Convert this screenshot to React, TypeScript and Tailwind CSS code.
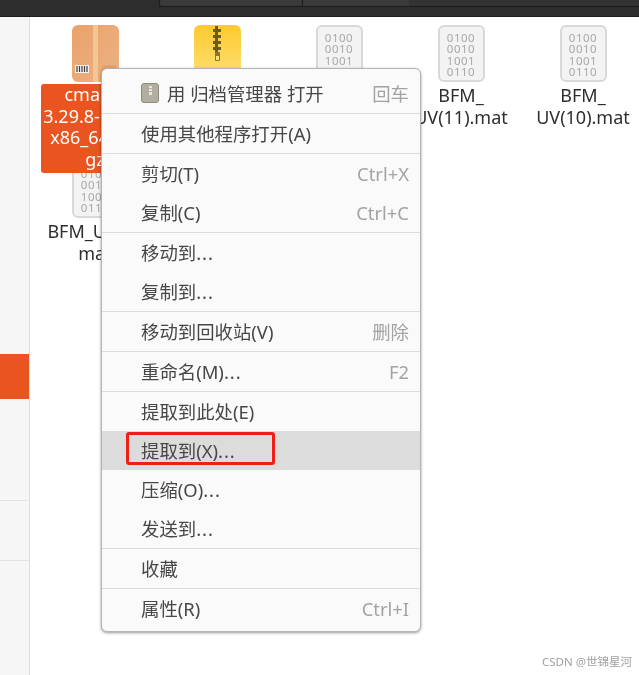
import React from "react";

const FONT = "font-['Noto_Sans','Noto_Sans_CJK_SC',sans-serif]";

function BinaryIcon() {
  return (
    <div className="w-[47px] h-[57px] shrink-0 rounded-[6px] border-2 border-[#d8d8d8] bg-[#f3f3f3] flex flex-col items-center pt-[5px] text-[11.5px] leading-[11.3px] tracking-[0.5px] text-[#a8a8a8]">
      <span>0100</span>
      <span>0010</span>
      <span>1001</span>
      <span>0110</span>
    </div>
  );
}

function PackageIcon() {
  return (
    <svg width="47" height="57" viewBox="0 0 47 57">
      <defs>
        <linearGradient id="pkgFill" x1="0" y1="0" x2="1" y2="1">
          <stop offset="0" stopColor="#e9a26b" />
          <stop offset="1" stopColor="#edb283" />
        </linearGradient>
      </defs>
      <rect x="0" y="0" width="47" height="57" rx="6" fill="url(#pkgFill)" />
      <rect x="21" y="0" width="5" height="57" fill="#f0c795" />
      <rect x="30" y="40" width="14" height="14" fill="#e5a26f" />
      <rect x="3" y="40" width="14" height="8" fill="#f7f3ee" />
      <path d="M5 41v6M7.5 41v6M10 41v6M12.5 41v6M15 41v6" stroke="#3d3d3d" strokeWidth="1.2" />
    </svg>
  );
}

function ZipIcon() {
  return (
    <svg width="47" height="57" viewBox="0 0 47 57">
      <defs>
        <linearGradient id="zipFill" x1="0" y1="0" x2="0" y2="1">
          <stop offset="0" stopColor="#fdc92f" />
          <stop offset="1" stopColor="#fde27a" />
        </linearGradient>
      </defs>
      <rect x="0" y="0" width="47" height="57" rx="6" fill="url(#zipFill)" />
      <path d="M21 1h3v3h3v3h-3v3h3v3h-3v3h3v3h-3v3h3v3h-3v3h-3v-3h-2v-3h2v-3h-2v-3h2v-3h-2v-3h2v-3h-2V4h2z" fill="#6e5a1e" />
      <rect x="21" y="27" width="5" height="9" rx="1" fill="#8a7430" />
      <rect x="22" y="31" width="3" height="4" fill="#fde27a" />
    </svg>
  );
}

function FileItem({ icon, children }: { icon: React.ReactNode; children?: React.ReactNode }) {
  return (
    <div className="flex flex-col items-center w-[122px]">
      {icon}
      {children}
    </div>
  );
}

type Row = { label: string; dots?: boolean; hint?: string; icon?: boolean; active?: boolean };

const groups: Row[][] = [
  [{ label: "用 归档管理器 打开", hint: "回车", icon: true }],
  [{ label: "使用其他程序打开(A)" }],
  [{ label: "剪切(T)", hint: "Ctrl+X" }, { label: "复制(C)", hint: "Ctrl+C" }],
  [{ label: "移动到", dots: true }, { label: "复制到", dots: true }],
  [{ label: "移动到回收站(V)", hint: "删除" }],
  [{ label: "重命名(M)", dots: true, hint: "F2" }],
  [
    { label: "提取到此处(E)" },
    { label: "提取到(X)", dots: true, active: true },
    { label: "压缩(O)", dots: true },
    { label: "发送到", dots: true },
  ],
  [{ label: "收藏" }],
  [{ label: "属性(R)", hint: "Ctrl+I" }],
];

function MenuRow({ row }: { row: Row }) {
  return (
    <div
      className={`relative h-[39px] flex items-center pl-[39px] pr-[11px] pt-[1px] text-[18.4px] text-[#474747] ${
        row.active ? "bg-[#dcdcdc]" : ""
      }`}
    >
      {row.icon && (
        <div className="w-[18px] h-[20px] mr-[8px] -mt-[3px] rounded-[3px] border border-[#8f8b7d] bg-[#b3afa0] flex flex-col items-center pt-[2px] gap-[1px]">
          <span className="w-[3px] h-[2px] bg-[#e8e6df]" />
          <span className="w-[3px] h-[2px] bg-[#e8e6df]" />
          <span className="w-[3px] h-[3px] bg-[#e8e6df]" />
        </div>
      )}
      <span className="flex-1 whitespace-nowrap">
        {row.label}
        {row.dots && <span className="tracking-[1px]">...</span>}
      </span>
      {row.hint && <span className="text-[#a3a3a3]">{row.hint}</span>}
      {row.active && (
        <div className="absolute left-[24px] top-[1px] w-[149px] h-[33px] rounded-[3px] border-[3px] border-[#f01e14]" />
      )}
    </div>
  );
}

export default function App() {
  return (
    <div className={`relative w-[639px] h-[675px] overflow-hidden bg-white ${FONT} blur-[0.4px]`}>
      <div className="h-[17px] bg-[#2d2d2d] border-b border-[#1e1e1e]">
        <div className="ml-[159px] h-[7px] border-b border-l border-[#1c1c1c] flex">
          <div className="w-[143px] bg-[#3a3a3a] border-r border-[#1c1c1c] rounded-bl-[3px]" />
          <div className="w-[106px] bg-[#3a3a3a]" />
          <div className="flex-1 bg-[#333333]" />
        </div>
      </div>

      <div className="flex h-[658px]">
        <aside className="w-[30px] shrink-0 bg-[#f6f6f6] border-r border-[#dedede] flex flex-col">
          <div className="h-[337px]" />
          <div className="h-[45px] bg-[#e95420]" />
          <div className="h-[101px]" />
          <div className="h-[1px] bg-[#e4e4e4]" />
          <div className="h-[59px]" />
          <div className="h-[1px] bg-[#e4e4e4]" />
        </aside>

        <main className="flex-1 pl-[4px] pt-[8px] text-[18px] leading-[21.5px] text-center text-[#2e2e2e]">
          <div className="flex">
            <FileItem icon={<PackageIcon />}>
              <div className="relative z-10 w-[108px] h-[89px] mt-[2px] rounded-[3px] bg-[#e95420] text-white whitespace-nowrap flex flex-col items-center">
                <span>cmake-</span>
                <span>3.29.8-linux-</span>
                <span>x86_64.tar.</span>
                <span>gz</span>
              </div>
            </FileItem>
            <FileItem icon={<ZipIcon />} />
            <FileItem icon={<BinaryIcon />} />
            <FileItem icon={<BinaryIcon />}>
              <div className="mt-[3px]">BFM_</div>
              <div>UV(11).mat</div>
            </FileItem>
            <FileItem icon={<BinaryIcon />}>
              <div className="mt-[3px]">BFM_</div>
              <div>UV(10).mat</div>
            </FileItem>
          </div>
          <div className="flex -mt-[12px]">
            <FileItem icon={<BinaryIcon />}>
              <div className="mt-[3px] whitespace-nowrap">BFM_UV(9).</div>
              <div>mat</div>
            </FileItem>
          </div>
        </main>
      </div>

      <div className="absolute z-20 left-[101px] top-[68px] w-[320px] h-[564px] rounded-[6px] border border-[#b4b4b4] bg-[#fafafa] pt-[5px] shadow-[0_1px_3px_rgba(0,0,0,0.4)] overflow-hidden">
        {groups.map((g, i) => (
          <div key={i} className={i > 0 ? "border-t border-[#dcdcdc]" : ""}>
            {g.map((r) => (
              <MenuRow key={r.label} row={r} />
            ))}
          </div>
        ))}
      </div>

      <div className="absolute right-[7px] bottom-[5px] text-[11.5px] text-[#a0a0a0]">
        CSDN @世锦星河
      </div>
    </div>
  );
}
